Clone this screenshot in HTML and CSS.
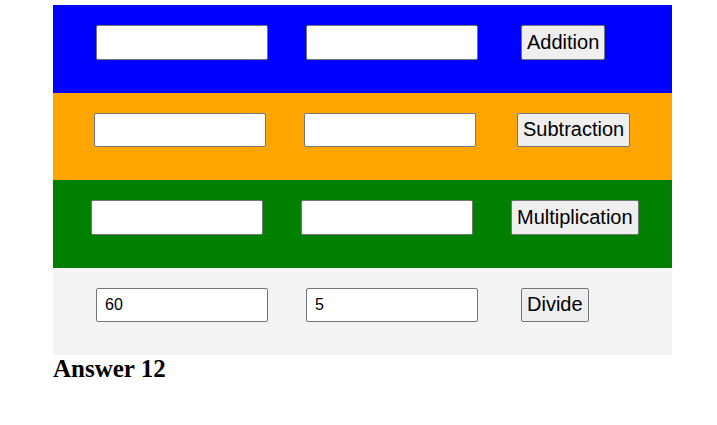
FILE: index.html
```html
<!DOCTYPE html>
<html>
<head>
<meta charset="utf-8">
<title>Calculator</title>
<link rel="stylesheet" href="styles.css">
</head>
<body>
<div class="calc">
  <div class="row row-add">
    <input class="field" type="text">
    <input class="field" type="text">
    <button class="btn">Addition</button>
  </div>
  <div class="row row-sub">
    <input class="field" type="text">
    <input class="field" type="text">
    <button class="btn">Subtraction</button>
  </div>
  <div class="row row-mul">
    <input class="field" type="text">
    <input class="field" type="text">
    <button class="btn">Multiplication</button>
  </div>
  <div class="row row-div">
    <input class="field" type="text" value="60">
    <input class="field" type="text" value="5">
    <button class="btn">Divide</button>
  </div>
  <h2 class="answer">Answer 12</h2>
</div>
</body>
</html>
```
FILE: styles.css
```css
html, body {
  margin: 0;
  padding: 0;
  background: #ffffff;
}

.calc {
  margin: 5px 0 0 53px;
  width: 619px;
}

.row {
  --pad: 43px;
  display: flex;
  align-items: flex-start;
  box-sizing: border-box;
  height: 87.5px;
  padding: 20px 0 0 var(--pad);
}

.row-add { background: #0000ff; }
.row-sub { background: #ffa500; --pad: 41px; }
.row-mul { background: #008000; --pad: 38px; }
.row-div { background: #f4f4f4; }

.field {
  box-sizing: border-box;
  width: 172px;
  height: 34.5px;
  margin: 0;
  padding: 0 8px;
  border: 1px solid #767676;
  border-radius: 2px;
  background: #ffffff;
  font-family: "Liberation Sans", Arial, sans-serif;
  font-size: 16px;
  color: #000000;
  outline: none;
}

.field + .field {
  margin-left: 38px;
}

.btn {
  box-sizing: border-box;
  height: 34.5px;
  margin: 0 0 0 var(--pad);
  padding: 0 5px;
  border: 1px solid #767676;
  border-radius: 2px;
  background: #efefef;
  font-family: "Liberation Sans", Arial, sans-serif;
  font-size: 20px;
  color: #000000;
}

.answer {
  margin: 0;
  font-family: "Liberation Serif", "Times New Roman", serif;
  font-size: 25px;
  font-weight: bold;
  line-height: 28px;
  color: #000000;
}
```
